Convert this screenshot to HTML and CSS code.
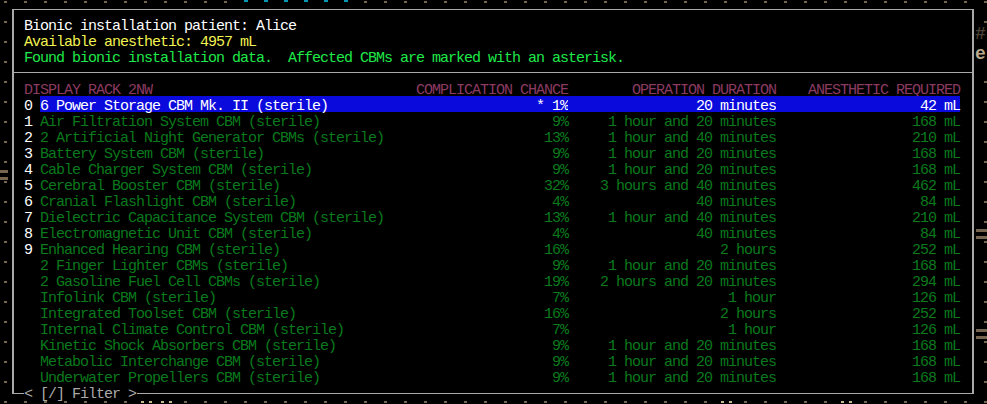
FILE: index.html
```html
<!DOCTYPE html>
<html>
<head>
<meta charset="utf-8">
<link rel="stylesheet" href="styles.css">
</head>
<body>
<div class="screen">
  <span class="map-glyph hash">#</span>
  <span class="map-glyph tan">e</span>
  <span class="bars bars-l1"></span>
  <span class="bars bars-r1"></span>
  <span class="bars bars-r2"></span>
  <span class="dots cyan-dots"></span>
  <span class="dots light-dots light-1"></span>
  <span class="dots light-dots light-2"></span>
  <span class="dots light-dots light-3"></span>
  <span class="dots light-dots light-4"></span>
  <div class="dialog">
    <div class="info">
      <div class="line white">Bionic installation patient: Alice</div>
      <div class="line yellow">Available anesthetic: 4957 mL</div>
      <div class="line lgreen">Found bionic installation data.  Affected CBMs are marked with an asterisk.</div>
    </div>
    <div class="sep"></div>
    <div class="list">
      <div class="row head"><span class="title">DISPLAY RACK 2NW</span><span class="r">COMPLICATION CHANCE</span><span class="r">OPERATION DURATION</span><span class="r">ANESTHETIC REQUIRED</span></div>
      <div class="row sel"><span class="num">0</span><span>6 Power Storage CBM Mk. II (sterile)</span><span class="r">* 1%</span><span class="r">20 minutes</span><span class="r">42 mL</span></div>
      <div class="row"><span class="num">1</span><span>Air Filtration System CBM (sterile)</span><span class="r">9%</span><span class="r">1 hour and 20 minutes</span><span class="r">168 mL</span></div>
      <div class="row"><span class="num">2</span><span>2 Artificial Night Generator CBMs (sterile)</span><span class="r">13%</span><span class="r">1 hour and 40 minutes</span><span class="r">210 mL</span></div>
      <div class="row"><span class="num">3</span><span>Battery System CBM (sterile)</span><span class="r">9%</span><span class="r">1 hour and 20 minutes</span><span class="r">168 mL</span></div>
      <div class="row"><span class="num">4</span><span>Cable Charger System CBM (sterile)</span><span class="r">9%</span><span class="r">1 hour and 20 minutes</span><span class="r">168 mL</span></div>
      <div class="row"><span class="num">5</span><span>Cerebral Booster CBM (sterile)</span><span class="r">32%</span><span class="r">3 hours and 40 minutes</span><span class="r">462 mL</span></div>
      <div class="row"><span class="num">6</span><span>Cranial Flashlight CBM (sterile)</span><span class="r">4%</span><span class="r">40 minutes</span><span class="r">84 mL</span></div>
      <div class="row"><span class="num">7</span><span>Dielectric Capacitance System CBM (sterile)</span><span class="r">13%</span><span class="r">1 hour and 40 minutes</span><span class="r">210 mL</span></div>
      <div class="row"><span class="num">8</span><span>Electromagnetic Unit CBM (sterile)</span><span class="r">4%</span><span class="r">40 minutes</span><span class="r">84 mL</span></div>
      <div class="row"><span class="num">9</span><span>Enhanced Hearing CBM (sterile)</span><span class="r">16%</span><span class="r">2 hours</span><span class="r">252 mL</span></div>
      <div class="row"><span class="num"></span><span>2 Finger Lighter CBMs (sterile)</span><span class="r">9%</span><span class="r">1 hour and 20 minutes</span><span class="r">168 mL</span></div>
      <div class="row"><span class="num"></span><span>2 Gasoline Fuel Cell CBMs (sterile)</span><span class="r">19%</span><span class="r">2 hours and 20 minutes</span><span class="r">294 mL</span></div>
      <div class="row"><span class="num"></span><span>Infolink CBM (sterile)</span><span class="r">7%</span><span class="r">1 hour</span><span class="r">126 mL</span></div>
      <div class="row"><span class="num"></span><span>Integrated Toolset CBM (sterile)</span><span class="r">16%</span><span class="r">2 hours</span><span class="r">252 mL</span></div>
      <div class="row"><span class="num"></span><span>Internal Climate Control CBM (sterile)</span><span class="r">7%</span><span class="r">1 hour</span><span class="r">126 mL</span></div>
      <div class="row"><span class="num"></span><span>Kinetic Shock Absorbers CBM (sterile)</span><span class="r">9%</span><span class="r">1 hour and 20 minutes</span><span class="r">168 mL</span></div>
      <div class="row"><span class="num"></span><span>Metabolic Interchange CBM (sterile)</span><span class="r">9%</span><span class="r">1 hour and 20 minutes</span><span class="r">168 mL</span></div>
      <div class="row"><span class="num"></span><span>Underwater Propellers CBM (sterile)</span><span class="r">9%</span><span class="r">1 hour and 20 minutes</span><span class="r">168 mL</span></div>
    </div>
    <div class="filter">&lt; [/] Filter &gt;</div>
  </div>
</div>
</body>
</html>
```
FILE: styles.css
```css
html, body {
  margin: 0;
  padding: 0;
  background: #000;
}
.screen {
  position: relative;
  width: 987px;
  height: 404px;
  overflow: hidden;
  background-color: #000;
  background-image: conic-gradient(from 270deg at 3px 2px, #76654f 90deg, transparent 0);
  background-size: 20px 20px;
  background-position: 4px 1px;
  font-family: "Liberation Mono", "DejaVu Sans Mono", monospace;
  font-size: 15px;
  letter-spacing: -1px;
  color: #fff;
  padding-top: 9px;
  box-sizing: border-box;
}
.dialog {
  position: relative;
  margin-left: 12px;
  width: 962px;
  height: 385px;
  box-sizing: border-box;
  border-style: solid;
  border-color: #a9a9a9;
  border-width: 1px 2px;
  background: #000;
}
.info {
  padding: 6px 0 8px 10px;
}
.line {
  height: 16px;
  line-height: 22px;
  white-space: pre;
}
.white { color: #ffffff; }
.yellow { color: #f2f250; }
.lgreen { color: #1fe84a; }
.sep {
  height: 1px;
  background: #a9a9a9;
}
.list {
  padding: 7px 0 9px 10px;
}
.row {
  display: grid;
  grid-template-columns: 16px 376px 152px 208px 184px;
  grid-auto-rows: 16px;
  height: 16px;
  line-height: 22px;
  white-space: pre;
  color: #0a7a1c;
}
.row .num { color: #ffffff; }
.row .r { text-align: right; }
.row.head { color: #8b3a62; }
.row.head .title { grid-column: 1 / 3; }
.row.sel span { background: #0a0adc; color: #ffffff; }
.row.sel span.num { background: transparent; }
.filter {
  position: absolute;
  left: 10px;
  bottom: -7px;
  height: 16px;
  line-height: 22px;
  padding-right: 1px;
  background: #000;
  color: #a9a9a9;
  white-space: pre;
}
.map-glyph {
  position: absolute;
  right: 0;
  width: 12px;
  height: 20px;
  line-height: 20px;
  font-size: 18px;
  letter-spacing: 0;
  background: #000;
  overflow: hidden;
}
.hash { top: 24px; color: #4c4036; font-weight: bold; }
.tan { top: 44px; color: #b8a98c; font-weight: bold; }
.bars {
  position: absolute;
  height: 11px;
  background: linear-gradient(#76654f 0 3px, transparent 3px 7px, #76654f 7px 10px, transparent 10px);
}
.bars-l1 { left: 0; top: 170px; width: 8px; }
.bars-r1 { right: 0; top: 229px; width: 11px; }
.bars-r2 { right: 0; top: 329px; width: 11px; }
.dots {
  position: absolute;
  height: 3px;
  background-color: #000;
  background-size: 20px 3px;
}
.cyan-dots {
  top: 0;
  left: 240px;
  width: 120px;
  background-image: conic-gradient(from 270deg at 4px 2px, #0896b4 90deg, transparent 0);
  background-position: 4px 0;
}
.light-dots {
  top: 401px;
  height: 2px;
  width: 20px;
  background-image: linear-gradient(90deg, transparent 0 1px, #c8b890 1px 4px, transparent 4px 9px, #c8b890 9px 12px, transparent 12px);
  background-size: 20px 2px;
  background-repeat: no-repeat;
  background-position: 0 0;
}
.light-1 { left: 140px; }
.light-2 { left: 160px; }
.light-3 { left: 720px; }
.light-4 { left: 840px; }
```
